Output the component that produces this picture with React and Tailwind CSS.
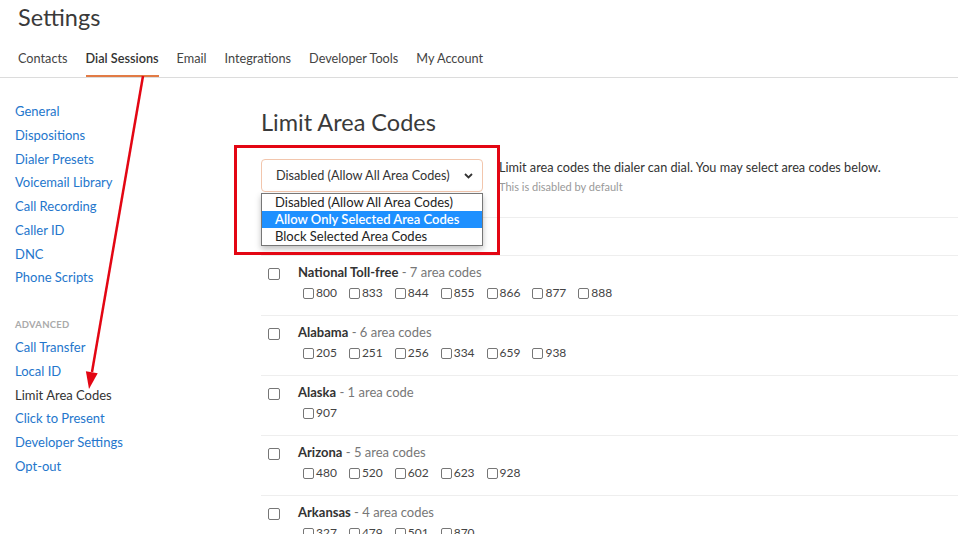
import React from 'react';

const tabs = ['Contacts', 'Dial Sessions', 'Email', 'Integrations', 'Developer Tools', 'My Account'];
const mainLinks = ['General', 'Dispositions', 'Dialer Presets', 'Voicemail Library', 'Call Recording', 'Caller ID', 'DNC', 'Phone Scripts'];
const advancedLinks = ['Call Transfer', 'Local ID', 'Limit Area Codes', 'Click to Present', 'Developer Settings', 'Opt-out'];

const regions = [
    ['National Toll-free', ['800', '833', '844', '855', '866', '877', '888']],
    ['Alabama', ['205', '251', '256', '334', '659', '938']],
    ['Alaska', ['907']],
    ['Arizona', ['480', '520', '602', '623', '928']],
    ['Arkansas', ['327', '479', '501', '870']],
];

export default function App() {
    return (
        <div className="relative h-[534px] overflow-hidden bg-white font-['Lato','Liberation_Sans',sans-serif] text-[#333]">
            <h1 className="px-[18px] pt-[4px] text-[23.5px] leading-[26px] text-[#3a3a3a]">Settings</h1>

            <nav className="mt-[20px] flex gap-[18px] border-b border-[#dcdcdc] px-[18px]">
                {tabs.map((tab) => (
                    <div
                        key={tab}
                        className={
                            tab === 'Dial Sessions'
                                ? 'border-b-2 border-[#e27b45] pb-[9px] text-[12.7px] leading-[16px] font-semibold text-[#333]'
                                : 'border-b-2 border-transparent pb-[9px] text-[12.7px] leading-[16px] text-[#444]'
                        }
                    >
                        {tab}
                    </div>
                ))}
            </nav>

            <div className="flex">
                <aside className="w-[261px] shrink-0 pl-[15px] pt-[22px] text-[13px] leading-[23.75px]">
                    {mainLinks.map((link) => (
                        <div key={link} className="text-[#2476cc]">{link}</div>
                    ))}
                    <div className="mt-[29px] mb-[5px] text-[9.5px] leading-[12px] font-bold tracking-wide text-[#aaa]">ADVANCED</div>
                    {advancedLinks.map((link) => (
                        <div key={link} className={link === 'Limit Area Codes' ? 'text-[#333]' : 'text-[#2476cc]'}>{link}</div>
                    ))}
                </aside>

                <main className="flex-1 pt-[30px]">
                    <h2 className="text-[23.5px] leading-[28px] text-[#3a3a3a]">Limit Area Codes</h2>

                    <div className="mt-[23px] flex items-start gap-[16px]">
                        <div className="relative">
                            <div className="flex h-[33px] w-[222px] items-center justify-between rounded-[4px] border border-[#f2c6ad] pl-[14px] pr-[8px] text-[12.7px] text-[#333]">
                                <span>Disabled (Allow All Area Codes)</span>
                                <svg width="11" height="10" viewBox="0 0 11 10" className="mt-[1px]">
                                    <path d="M2 3 L5.5 6.5 L9 3" fill="none" stroke="#333" strokeWidth="1.8" />
                                </svg>
                            </div>

                            <div className="absolute left-0 top-[34px] z-10 w-[222px] border border-[#767676] bg-white text-[13px] leading-[17px] shadow-[0_3px_6px_rgba(0,0,0,0.25)]">
                                <div className="pl-[13px] text-[#222]">Disabled (Allow All Area Codes)</div>
                                <div className="bg-[#1e90ff] pl-[13px] font-semibold text-white">Allow Only Selected Area Codes</div>
                                <div className="pl-[13px] text-[#222]">Block Selected Area Codes</div>
                            </div>

                            <div className="absolute left-[-27px] top-[-14px] z-20 h-[110px] w-[266px] border-[3px] border-[#e30613]" />
                        </div>

                        <div>
                            <div className="text-[12.7px] leading-[16px] text-[#333]">Limit area codes the dialer can dial. You may select area codes below.</div>
                            <div className="mt-[5px] text-[11px] leading-[14px] text-[#999]">This is disabled by default</div>
                        </div>
                    </div>

                    <div className="mt-[23px] h-[38px] border-t border-[#eee]" />

                    {regions.map(([name, codes]) => (
                        <div key={name} className="flex h-[60px] border-t border-[#eee] pl-[7px] pt-[7px]">
                            <span className="mt-[5px] h-[12px] w-[12px] shrink-0 rounded-[2px] border border-[#767676]" />
                            <div className="ml-[18px]">
                                <div className="text-[13px] leading-[18px]">
                                    <span className="font-bold text-[#333]">{name}</span>
                                    <span className="text-[#777]"> - {codes.length} area {codes.length === 1 ? 'code' : 'codes'}</span>
                                </div>
                                <div className="mt-[4px] ml-[5px] flex gap-[12px] text-[12px] leading-[16px] text-[#444]">
                                    {codes.map((code) => (
                                        <span key={code} className="flex items-center gap-[2px]">
                                            <span className="h-[11px] w-[11px] rounded-[2px] border border-[#767676]" />
                                            {code}
                                        </span>
                                    ))}
                                </div>
                            </div>
                        </div>
                    ))}
                </main>
            </div>

            <svg className="pointer-events-none absolute left-0 top-0 z-30" width="958" height="534">
                <line x1="143" y1="76" x2="92" y2="372" stroke="#e30613" strokeWidth="2.5" />
                <polygon points="89,389 97.7,373.2 85.9,371.2" fill="#e30613" />
            </svg>
        </div>
    );
}
